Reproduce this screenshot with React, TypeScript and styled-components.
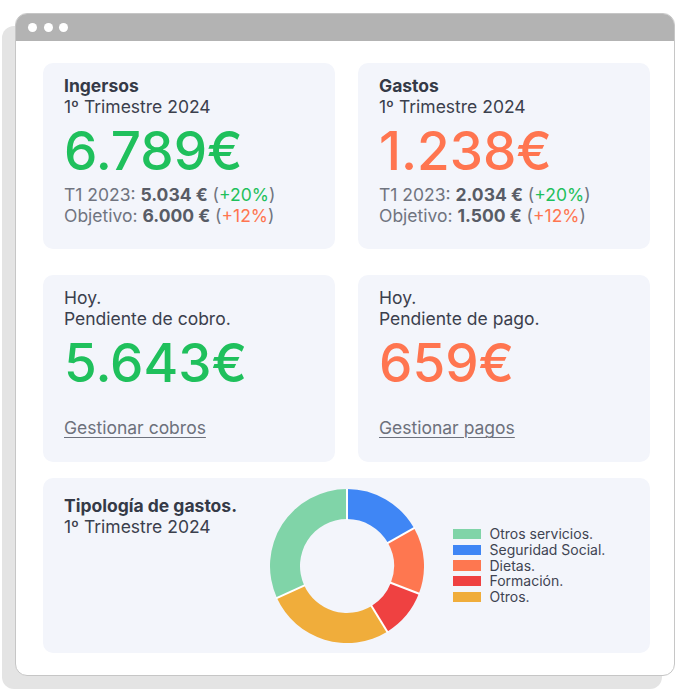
import React from 'react';
import styled, { createGlobalStyle } from 'styled-components';

const GlobalStyle = createGlobalStyle`
  body {
    margin: 0;
    background: #ffffff;
    font-family: Inter, "Noto Sans", sans-serif;
  }
`;

const GREEN = '#1fc05c';
const ORANGE = '#ff7550';

// Lienzo de la captura
const Stage = styled.div`
  width: 690px;
  height: 690px;
  padding: 13px 0 0 15px;
  box-sizing: border-box;
`;

// Ventana del navegador con su "sombra" gris detrás
const Window = styled.div`
  width: 660px;
  height: 663px;
  box-sizing: border-box;
  border: 1px solid #c6c6c6;
  border-radius: 12px;
  overflow: hidden;
  background: #ffffff;
  box-shadow: -13px 13px 0 0 #e4e4e4;
  display: flex;
  flex-direction: column;
`;

const TitleBar = styled.div`
  height: 27px;
  background: #b3b3b3;
  display: flex;
  align-items: center;
  gap: 6.5px;
  padding-left: 12px;
  flex-shrink: 0;
`;

const Dot = styled.span`
  width: 9px;
  height: 9px;
  border-radius: 50%;
  background: #ffffff;
`;

const Content = styled.div`
  padding: 22px 24px 0 27px;
  display: flex;
  flex-direction: column;
`;

const CardGrid = styled.div`
  display: grid;
  grid-template-columns: 292px 292px;
  grid-template-rows: 186px 187px;
  column-gap: 23px;
  row-gap: 26px;
`;

const Card = styled.div`
  background: #f3f5fb;
  border-radius: 10px;
  padding: 12px 21px;
  display: flex;
  flex-direction: column;
  color: #3b404d;
`;

const Title = styled.div`
  font-size: 17.5px;
  line-height: 21px;
  font-weight: 700;
  color: #353a47;
`;

const Line = styled.div`
  font-size: 17.5px;
  line-height: 21px;
  color: #3b404d;
`;

const Amount = styled.div<{ $tone: 'green' | 'orange'; $lh?: number }>`
  font-size: 53px;
  line-height: ${(p) => p.$lh ?? 68}px;
  font-weight: 500;
  color: ${(p) => (p.$tone === 'green' ? GREEN : ORANGE)};
`;

const Stat = styled.div`
  font-size: 17.5px;
  line-height: 20.5px;
  color: #70747f;
`;

const Strong = styled.span`
  font-weight: 700;
  color: #585c66;
`;

const Delta = styled.span<{ $tone: 'green' | 'orange' }>`
  color: ${(p) => (p.$tone === 'green' ? GREEN : ORANGE)};
`;

const Link = styled.a`
  margin-top: 19px;
  font-size: 17.5px;
  line-height: 21px;
  color: #6d717c;
  text-decoration: underline;
  text-underline-offset: 3px;
  text-decoration-thickness: 1px;
`;

const ChartCard = styled(Card)`
  margin-top: 16px;
  height: 175px;
  box-sizing: border-box;
  padding: 0 21px;
  display: grid;
  grid-template-columns: 1fr 154px 1fr;
  align-items: center;
`;

const ChartText = styled.div`
  align-self: start;
  padding-top: 17px;
`;

const Legend = styled.ul`
  list-style: none;
  margin: 0;
  padding: 0 0 0 29px;
  display: flex;
  flex-direction: column;
`;

const LegendItem = styled.li`
  display: flex;
  align-items: center;
  gap: 9px;
  font-size: 14px;
  line-height: 15.7px;
  color: #3f4452;
  white-space: nowrap;
`;

const Swatch = styled.span<{ $color: string }>`
  width: 28px;
  height: 10.5px;
  background: ${(p) => p.$color};
  flex-shrink: 0;
`;

const slices = [
  { label: 'Seguridad Social.', color: '#3f86f5', from: 0, to: 60.5 },
  { label: 'Dietas.', color: '#fe7750', from: 60.5, to: 111 },
  { label: 'Formación.', color: '#ef4141', from: 111, to: 148.5 },
  { label: 'Otros.', color: '#f0ad3b', from: 148.5, to: 245.5 },
  { label: 'Otros servicios.', color: '#80d4a8', from: 245.5, to: 360 },
];

const legend = [
  { label: 'Otros servicios.', color: '#80d4a8' },
  { label: 'Seguridad Social.', color: '#3f86f5' },
  { label: 'Dietas.', color: '#fe7750' },
  { label: 'Formación.', color: '#ef4141' },
  { label: 'Otros.', color: '#f0ad3b' },
];

const C = 77;
const R = 77;
const r = 47;

const xy = (rad: number, deg: number) => {
  const a = (deg * Math.PI) / 180;
  return [C + rad * Math.sin(a), C - rad * Math.cos(a)];
};

const pt = (rad: number, deg: number) => {
  const [x, y] = xy(rad, deg);
  return `${x.toFixed(2)} ${y.toFixed(2)}`;
};

const sector = (a0: number, a1: number) => {
  const large = a1 - a0 > 180 ? 1 : 0;
  return `M ${pt(R, a0)} A ${R} ${R} 0 ${large} 1 ${pt(R, a1)} L ${pt(r, a1)} A ${r} ${r} 0 ${large} 0 ${pt(r, a0)} Z`;
};

const Donut = () => (
  <svg width="154" height="154" viewBox="0 0 154 154">
    {slices.map((s) => (
      <path key={s.label} d={sector(s.from, s.to)} fill={s.color} />
    ))}
    {slices.map((s) => {
      const [x1, y1] = xy(r - 1, s.from);
      const [x2, y2] = xy(R + 1, s.from);
      return <line key={`sep-${s.label}`} x1={x1} y1={y1} x2={x2} y2={y2} stroke="#ffffff" strokeWidth="2" />;
    })}
  </svg>
);

export default function App() {
  return (
    <Stage>
      <GlobalStyle />
      <Window>
        <TitleBar>
          <Dot />
          <Dot />
          <Dot />
        </TitleBar>
        <Content>
          <CardGrid>
            <Card>
              <Title>Ingersos</Title>
              <Line>1º Trimestre 2024</Line>
              <Amount $tone="green">6.789€</Amount>
              <Stat>
                T1 2023: <Strong>5.034 €</Strong> (<Delta $tone="green">+20%</Delta>)
              </Stat>
              <Stat>
                Objetivo: <Strong>6.000 €</Strong> (<Delta $tone="orange">+12%</Delta>)
              </Stat>
            </Card>
            <Card>
              <Title>Gastos</Title>
              <Line>1º Trimestre 2024</Line>
              <Amount $tone="orange">1.238€</Amount>
              <Stat>
                T1 2023: <Strong>2.034 €</Strong> (<Delta $tone="green">+20%</Delta>)
              </Stat>
              <Stat>
                Objetivo: <Strong>1.500 €</Strong> (<Delta $tone="orange">+12%</Delta>)
              </Stat>
            </Card>
            <Card>
              <Line>Hoy.</Line>
              <Line>Pendiente de cobro.</Line>
              <Amount $tone="green" $lh={69}>5.643€</Amount>
              <Link>Gestionar cobros</Link>
            </Card>
            <Card>
              <Line>Hoy.</Line>
              <Line>Pendiente de pago.</Line>
              <Amount $tone="orange" $lh={69}>659€</Amount>
              <Link>Gestionar pagos</Link>
            </Card>
          </CardGrid>
          <ChartCard>
            <ChartText>
              <Title>Tipología de gastos.</Title>
              <Line>1º Trimestre 2024</Line>
            </ChartText>
            <Donut />
            <Legend>
              {legend.map((l) => (
                <LegendItem key={l.label}>
                  <Swatch $color={l.color} />
                  {l.label}
                </LegendItem>
              ))}
            </Legend>
          </ChartCard>
        </Content>
      </Window>
    </Stage>
  );
}
